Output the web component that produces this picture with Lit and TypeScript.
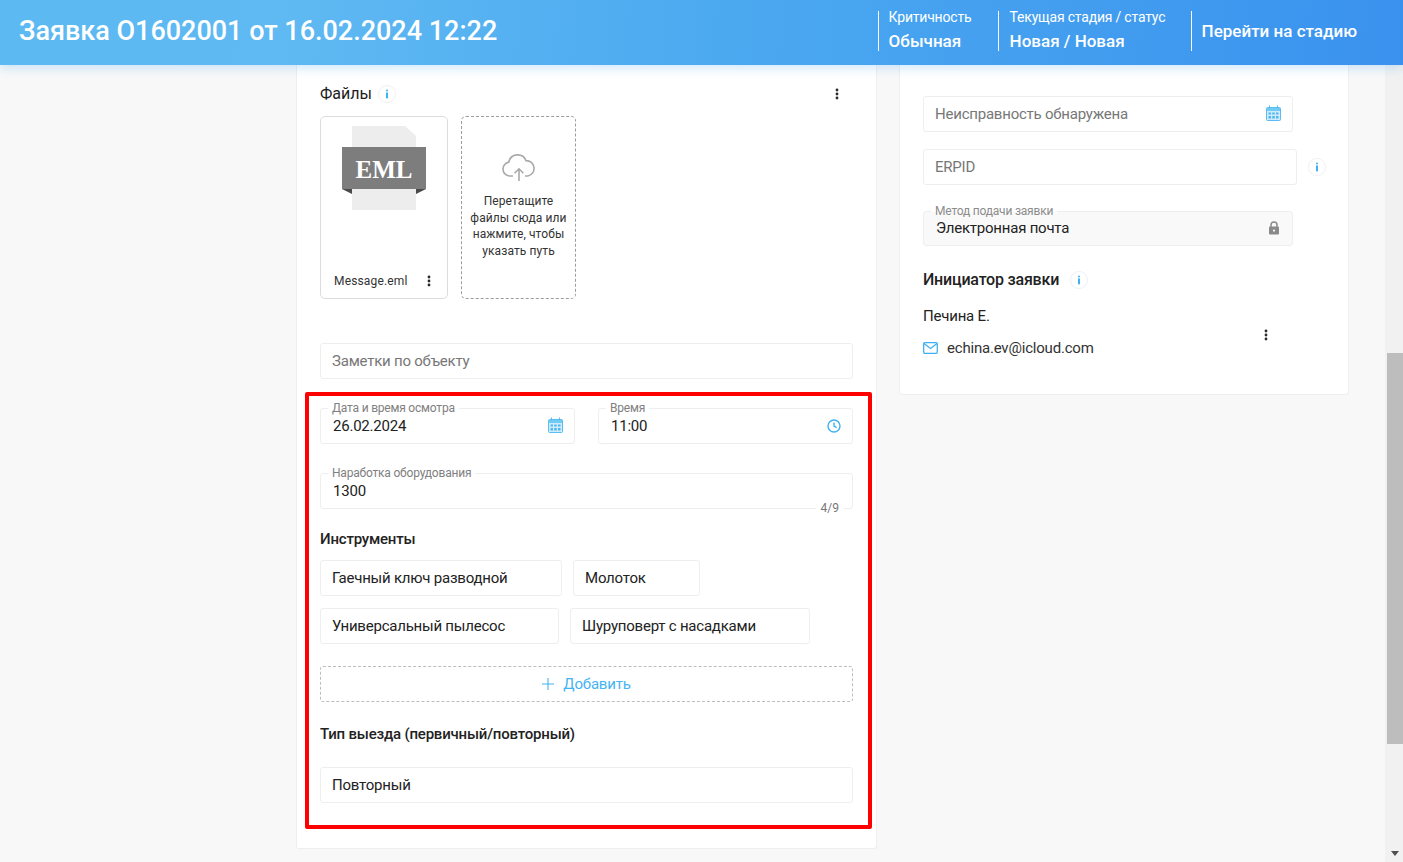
import { LitElement, css, html, svg } from "lit";
import { customElement } from "lit/decorators.js";

const tools = [
  { label: "Гаечный ключ разводной", width: 242 },
  { label: "Молоток", width: 127 },
  { label: "Универсальный пылесос", width: 239 },
  { label: "Шуруповерт с насадками", width: 240 },
];

const infoIcon = html`<svg class="info" width="18" height="18" viewBox="0 0 18 18">
  <circle cx="9" cy="9" r="8.5" fill="#fff" stroke="#eef0f2" />
  <rect x="8" y="4.600" width="2" height="2" rx="1" fill="#3fb1f2" />
  <rect x="8" y="7.500" width="2" height="5.800" fill="#3fb1f2" />
</svg>`;

const dots = html`<svg class="dots" width="4" height="12" viewBox="0 0 4 12" fill="#2b2b2b">
  <circle cx="2" cy="2" r="1.4" />
  <circle cx="2" cy="6" r="1.4" />
  <circle cx="2" cy="10" r="1.4" />
</svg>`;

const calendarIcon = html`<svg class="calendar" width="15" height="16" viewBox="0 0 15 16">
  <rect x=".5" y="2.500" width="14" height="13" rx="1" fill="#cdebfb" stroke="#58bdf0" />
  <rect x="1" y="3" width="13" height="3" fill="#6fcaf4" />
  <path d="M3.500 .5v3M11.500 .5v3" stroke="#58bdf0" />
  <path d="M2.500 7.500h2.500v2H2.500zM6.250 7.500h2.500v2h-2.500zM10 7.500h2.500v2H10zM2.500 11h2.500v2.500H2.500zM6.250 11h2.500v2.500h-2.500zM10 11h2.500v2.500H10z" fill="#4fb8ee" />
</svg>`;

const clockIcon = html`<svg width="14" height="14" viewBox="0 0 14 14" fill="none" stroke="#3fb1f2" stroke-width="1.400">
  <circle cx="7" cy="7" r="6" />
  <path d="M7 3.600V7l2.600 1.600" />
</svg>`;

const lockIcon = html`<svg class="lock" width="12" height="14" viewBox="0 0 12 14">
  <path d="M3 6V4a3 3 0 0 1 6 0v2" fill="none" stroke="#8a8a8a" stroke-width="1.500" />
  <rect x="1" y="5.600" width="10" height="8" rx="1" fill="#8a8a8a" />
  <circle cx="6" cy="9.600" r="1.100" fill="#f9f9f9" />
</svg>`;

const mailIcon = html`<svg width="15" height="12" viewBox="0 0 15 12" fill="none" stroke="#3fb1f2" stroke-width="1.300">
  <rect x=".7" y=".7" width="13.600" height="10.600" rx="1.200" />
  <path d="M1 1.500l6.500 5 6.500-5" />
</svg>`;

const cloudIcon = html`<svg width="34" height="28" viewBox="0 0 34 28" fill="none" stroke="#a9a9a9" stroke-width="1.600">
  <path d="M11 22H8a7 7 0 0 1-1.200-13.900A9 9 0 0 1 24 6.600 7.800 7.800 0 0 1 26 22h-3" />
  <path d="M17 27V15M12.600 19.200L17 14.800l4.400 4.400" />
</svg>`;

const emlIcon = svg`
  <path d="M10 0H63L74 10V84H10z" fill="#ededed" />
  <rect x="0" y="21" width="84" height="42" fill="#7d7d7d" />
  <path d="M0 63H10V68zM84 63H74V68z" fill="#4a4a4a" />
  <text x="42" y="52" text-anchor="middle" class="eml-text">EML</text>
`;

@customElement("app-root")
export class AppRoot extends LitElement {
  static styles = css`
    :host {
      display: flex;
      flex-direction: column;
      height: 862px;
      overflow: hidden;
      background: #f8f8f8;
      font-family: Roboto, "Liberation Sans", sans-serif;
      color: #222;
      font-size: 15px;
    }
    .top {
      position: relative;
      z-index: 2;
      flex: 0 0 65px;
      box-sizing: border-box;
      display: flex;
      align-items: center;
      padding: 0 46px 4px 19px;
      color: #fff;
      background: linear-gradient(95deg, #5cb9f2 0%, #5fb9f2 20%, #4ba9f0 52%, #3a92ee 100%);
      box-shadow: 0 3px 10px rgba(90, 175, 240, 0.3);
    }
    .title {
      flex: 1;
      font-size: 27px;
      font-weight: 500;
    }
    .stat {
      height: 40px;
      border-left: 1px solid #fff;
      padding-left: 10px;
      display: flex;
      flex-direction: column;
      justify-content: space-between;
    }
    .stat small {
      font-size: 14px;
      line-height: 14px;
      margin-top: -1px;
      letter-spacing: -0.2px;
    }
    .stat b {
      font-size: 17px;
      line-height: 20px;
      font-weight: 500;
    }
    .stat.crit {
      width: 109px;
    }
    .stat.stage {
      width: 181px;
      padding-left: 11px;
    }
    .stat.go {
      justify-content: center;
      font-size: 17px;
      font-weight: 500;
    }
    .body {
      flex: 1;
      display: flex;
      min-height: 0;
    }
    .cols {
      flex: 1;
      display: flex;
      align-items: flex-start;
      gap: 22px;
      padding-left: 296px;
    }
    .card {
      background: #fff;
      border: 1px solid #eeeeee;
      border-top: 0;
      border-radius: 0 0 3px 3px;
      box-sizing: border-box;
    }
    .left {
      width: 581px;
      height: 784px;
      padding: 20px 23px 0;
    }
    .right {
      width: 450px;
      height: 330px;
      padding: 31px 23px 0;
    }
    .heading {
      display: flex;
      align-items: center;
      font-weight: 500;
      font-size: 15px;
      line-height: 18px;
      letter-spacing: -0.2px;
    }
    .heading.files-title {
      font-size: 16px;
      font-weight: 400;
      letter-spacing: 0;
      color: #1c1c1c;
    }
    .heading .info {
      margin-left: 8px;
    }
    .heading.files-title .info {
      margin-left: 6px;
    }
    .heading .more {
      margin-left: auto;
      display: flex;
      margin-right: 14px;
    }
    .files {
      display: flex;
      gap: 13px;
      margin-top: 13px;
    }
    .file {
      width: 128px;
      height: 183px;
      box-sizing: border-box;
      border: 1px solid #dcdcdc;
      border-radius: 5px;
      padding: 9px 0 0 21px;
      display: flex;
      flex-direction: column;
    }
    .file svg.doc {
      display: block;
    }
    .eml-text {
      font-family: "Liberation Serif", serif;
      font-weight: 700;
      font-size: 25px;
      fill: #fff;
    }
    .file-foot {
      margin-top: auto;
      margin-bottom: 9px;
      margin-left: -8px;
      display: flex;
      align-items: center;
      gap: 20px;
      font-size: 12px;
      line-height: 16px;
      letter-spacing: 0.15px;
      color: #333;
    }
    .file-foot svg {
      flex: none;
    }
    .drop {
      width: 115px;
      height: 183px;
      box-sizing: border-box;
      border: 1px dashed #9c9c9c;
      border-radius: 5px;
      display: flex;
      flex-direction: column;
      align-items: center;
      padding: 37px 8px 0;
      font-size: 12px;
      line-height: 16.700px;
      letter-spacing: 0.1px;
      text-align: center;
      color: #333;
    }
    .drop svg {
      flex: none;
      margin-bottom: 11px;
    }
    .field {
      position: relative;
      height: 36px;
      box-sizing: border-box;
      border: 1px solid #eeeeee;
      border-radius: 3px;
      display: flex;
      align-items: center;
      justify-content: space-between;
      padding: 0 11px;
      font-size: 15px;
      letter-spacing: -0.22px;
      background: #fff;
      color: #222;
      white-space: nowrap;
    }
    .field.placeholder {
      color: #777;
    }
    .field.filled {
      padding-left: 12px;
    }
    .field label {
      position: absolute;
      left: 7px;
      top: -7px;
      padding: 0 4px;
      font-size: 12px;
      line-height: 13px;
      letter-spacing: -0.2px;
      color: #808080;
      background: #fff;
    }
    .calendar {
      margin-top: -2px;
    }
    .count {
      position: absolute;
      right: 8px;
      bottom: -7px;
      padding: 0 5px;
      font-size: 12px;
      line-height: 13px;
      letter-spacing: 0;
      color: #777;
      background: #fff;
    }
    .notes {
      margin-top: 44px;
    }
    .pair {
      display: flex;
      gap: 23px;
      margin-top: 29px;
    }
    .pair .field {
      flex: 1;
    }
    .hours {
      margin-top: 29px;
    }
    .tools-title {
      margin-top: 21px;
    }
    .tools {
      display: flex;
      flex-wrap: wrap;
      column-gap: 11px;
      row-gap: 12px;
      margin-top: 12px;
    }
    .add {
      margin-top: 22px;
      height: 36px;
      box-sizing: border-box;
      border: 1px dashed #bdbdbd;
      border-radius: 3px;
      display: flex;
      align-items: center;
      justify-content: center;
      gap: 9px;
      color: #45b4f2;
      font-size: 15px;
      letter-spacing: -0.2px;
    }
    .type-title {
      margin-top: 23px;
    }
    .type {
      margin-top: 24px;
    }
    .narrow {
      width: 370px;
    }
    .erp-row {
      display: flex;
      align-items: center;
      gap: 11px;
      margin-top: 17px;
    }
    .erp-row .field {
      flex: none;
      width: 374px;
    }
    .erp-row .info {
      flex: none;
    }
    .locked {
      margin-top: 26px;
      height: 35px;
      padding-bottom: 1px;
      background: #f9f9f9;
    }
    .locked label {
      background: linear-gradient(#fff 50%, #f9f9f9 50%);
      color: #8c8c8c;
    }
    .lock {
      margin-right: 1px;
    }
    .initiator {
      font-size: 16px;
      margin-top: 25px;
    }
    .initiator .info {
      margin-left: 11px;
    }
    .person {
      display: flex;
      align-items: center;
      justify-content: space-between;
      margin-top: 18px;
      padding-right: 57px;
      letter-spacing: -0.2px;
    }
    .person-name {
      line-height: 18px;
      font-size: 15px;
    }
    .person-mail {
      display: flex;
      align-items: center;
      gap: 9px;
      margin-top: 14px;
      line-height: 18px;
      color: #333;
    }
    .person svg {
      flex: none;
    }
    .person > .dots {
      margin-top: 6px;
    }
    .scroll {
      flex: 0 0 16px;
      padding-left: 2px;
      background: #f1f1f1;
      display: flex;
      flex-direction: column;
    }
    .thumb {
      height: 391px;
      margin-top: 288px;
      background: #bdbdbd;
    }
    .arrow {
      margin-top: auto;
      margin-bottom: 6px;
      align-self: center;
      width: 0;
      height: 0;
      border: 4.500px solid transparent;
      border-top: 5px solid #505050;
      border-bottom: 0;
    }
    .mark {
      position: absolute;
      left: 305px;
      top: 392px;
      width: 567px;
      height: 437px;
      box-sizing: border-box;
      border: 4px solid #ff0000;
      border-radius: 2px;
      z-index: 1;
      pointer-events: none;
    }
  `;

  render() {
    return html`
      <header class="top">
        <div class="title">Заявка О1602001 от 16.02.2024 12:22</div>
        <div class="stat crit"><small>Критичность</small><b>Обычная</b></div>
        <div class="stat stage"><small>Текущая стадия / статус</small><b>Новая / Новая</b></div>
        <div class="stat go">Перейти на стадию</div>
      </header>
      <div class="body">
        <div class="cols">
          <section class="card left">
            <div class="heading files-title">
              Файлы ${infoIcon}
              <span class="more">${dots}</span>
            </div>
            <div class="files">
              <div class="file">
                <svg class="doc" width="84" height="84" viewBox="0 0 84 84">${emlIcon}</svg>
                <div class="file-foot">Message.eml ${dots}</div>
              </div>
              <div class="drop">
                ${cloudIcon}
                <span>Перетащите файлы сюда или нажмите, чтобы указать путь</span>
              </div>
            </div>
            <div class="field placeholder notes">Заметки по объекту</div>
            <div class="pair">
              <div class="field filled">
                <label>Дата и время осмотра</label>26.02.2024 ${calendarIcon}
              </div>
              <div class="field filled">
                <label>Время</label>11:00 ${clockIcon}
              </div>
            </div>
            <div class="field filled hours">
              <label>Наработка оборудования</label>1300
              <span class="count">4/9</span>
            </div>
            <div class="heading tools-title">Инструменты</div>
            <div class="tools">
              ${tools.map(
                (t) => html`<div class="field" style="width:${t.width}px">${t.label}</div>`,
              )}
            </div>
            <div class="add">
              <svg width="12" height="12" viewBox="0 0 12 12" stroke="#45b4f2" stroke-width="1.100">
                <path d="M6 0v12M0 6h12" />
              </svg>
              Добавить
            </div>
            <div class="heading type-title">Тип выезда (первичный/повторный)</div>
            <div class="field type">Повторный</div>
          </section>
          <section class="card right">
            <div class="field placeholder narrow">Неисправность обнаружена ${calendarIcon}</div>
            <div class="erp-row">
              <div class="field placeholder">ERPID</div>
              ${infoIcon}
            </div>
            <div class="field filled narrow locked">
              <label>Метод подачи заявки</label>Электронная почта ${lockIcon}
            </div>
            <div class="heading initiator">Инициатор заявки ${infoIcon}</div>
            <div class="person">
              <div>
                <div class="person-name">Печина Е.</div>
                <div class="person-mail">${mailIcon} echina.ev@icloud.com</div>
              </div>
              ${dots}
            </div>
          </section>
        </div>
        <div class="scroll">
          <div class="thumb"></div>
          <div class="arrow"></div>
        </div>
      </div>
      <div class="mark"></div>
    `;
  }
}
